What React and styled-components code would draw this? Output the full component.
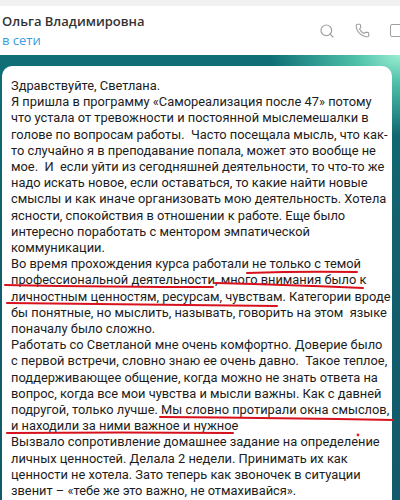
import React from 'react';
import styled, { createGlobalStyle } from 'styled-components';
import { Search, Phone } from 'lucide-react';

const GlobalStyle = createGlobalStyle`
  html, body {
    margin: 0;
    padding: 0;
    background-color: #f1f1f1;
  }
  body {
    font-family: "Open Sans", "Noto Sans", sans-serif;
  }
`;

const Page = styled.div`
  display: flex;
  flex-direction: column;
  width: 400px;
  height: 500px;
  overflow: hidden;
`;

const TopStrip = styled.div`
  height: 6px;
  background-color: #f1f1f1;
`;

const Header = styled.div`
  display: flex;
  justify-content: space-between;
  align-items: center;
  height: 49px;
  padding-left: 2px;
  background-color: #fff;
`;

const Peer = styled.div`
  display: flex;
  flex-direction: column;
  gap: 2px;
`;

const PeerName = styled.div`
  font-size: 13px;
  font-weight: 600;
  color: #333;
  line-height: 17px;
`;

const PeerStatus = styled.div`
  font-size: 13px;
  color: #3a9de0;
  line-height: 17px;
`;

const Tools = styled.div`
  display: flex;
  align-items: center;
  gap: 20px;
  margin-right: -4px;
  color: #a0a0a0;
`;

const SquareIcon = styled.div`
  width: 14px;
  height: 13px;
  box-sizing: border-box;
  border: 1.5px solid #a0a0a0;
  border-radius: 2px;
`;

const Chat = styled.div`
  flex: 1;
  padding: 11px 8px 0 2px;
  background:
    radial-gradient(ellipse 130px 80px at 100% 0%, #9aeed2 0%, #4dbfa8 35%, rgba(20, 120, 118, 0) 100%),
    linear-gradient(180deg, #0f6f76 0%, #125f6e 40%, #115a6b 100%);
`;

const Bubble = styled.div`
  position: relative;
  height: 100%;
  padding: 12px 9px 0 9px;
  background-color: #fff;
  border-radius: 10px 10px 0 0;
  font-family: Roboto, "Open Sans", sans-serif;
  font-size: 12.85px;
  line-height: 16.2px;
  color: #1c1c1c;
`;

const Line = styled.div`
  white-space: pre;
`;

const Marks = styled.svg`
  position: absolute;
  left: 0;
  top: 0;
  pointer-events: none;
`;

const lines = [
  'Здравствуйте, Светлана.',
  'Я пришла в программу «Самореализация после 47» потому',
  'что устала от тревожности и постоянной мыслемешалки в',
  'голове по вопросам работы.  Часто посещала мысль, что как-',
  'то случайно я в преподавание попала, может это вообще не',
  'мое.  И  если уйти из сегодняшней деятельности, то что-то же',
  'надо искать новое, если оставаться, то какие найти новые',
  'смыслы и как иначе организовать мою деятельность. Хотела',
  'ясности, спокойствия в отношении к работе. Еще было',
  'интересно поработать с ментором эмпатической',
  'коммуникации.',
  'Во время прохождения курса работали не только с темой',
  'профессиональной деятельности, много внимания было к',
  'личностным ценностям, ресурсам, чувствам. Категории вроде',
  'бы понятные, но мыслить, называть, говорить на этом  языке',
  'поначалу было сложно.',
  'Работать со Светланой мне очень комфортно. Доверие было',
  'с первой встречи, словно знаю ее очень давно.  Такое теплое,',
  'поддерживающее общение, когда можно не знать ответа на',
  'вопрос, когда все мои чувства и мысли важны. Как с давней',
  'подругой, только лучше. Мы словно протирали окна смыслов,',
  'и находили за ними важное и нужное',
  'Вызвало сопротивление домашнее задание на определение',
  'личных ценностей. Делала 2 недели. Принимать их как',
  'ценности не хотела. Зато теперь как звоночек в ситуации',
  'звенит – «тебе же это важно, не отмахивайся».',
];

// hand-drawn red underlines, coordinates relative to the bubble
const strokes = [
  'M245 207 Q300 205 355 206',
  'M3 219 Q110 221 211 221 M213 217 Q290 219 361 222',
  'M5 237 Q140 239 275 240',
  'M158 351 Q280 352 392 354',
  'M5 367 Q120 366 231 367',
];

const App = () => (
  <Page>
    <GlobalStyle />
    <TopStrip />
    <Header>
      <Peer>
        <PeerName>Ольга Владимировна</PeerName>
        <PeerStatus>в сети</PeerStatus>
      </Peer>
      <Tools>
        <Search size={16} strokeWidth={1.8} />
        <Phone size={15} strokeWidth={1.8} />
        <SquareIcon />
      </Tools>
    </Header>
    <Chat>
      <Bubble>
        {lines.map((text, i) => (
          <Line key={i}>{text}</Line>
        ))}
        <Marks width="392" height="440" viewBox="0 0 392 440">
          {strokes.map((d, i) => (
            <path key={i} d={d} fill="none" stroke="#d8121c" strokeWidth="2" strokeLinecap="round" />
          ))}
          <circle cx="356" cy="369" r="1.4" fill="#e0202a" />
        </Marks>
      </Bubble>
    </Chat>
  </Page>
);

export default App;
